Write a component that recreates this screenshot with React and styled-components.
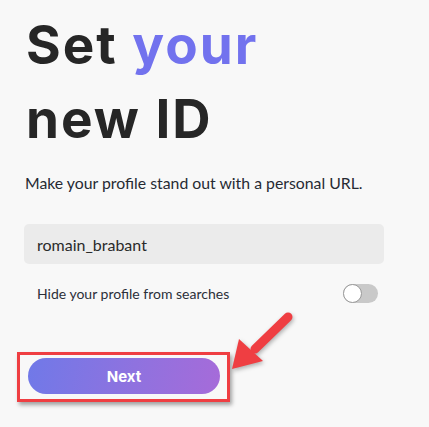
import React from "react";
import styled, { createGlobalStyle } from "styled-components";

const GlobalStyle = createGlobalStyle`
  html, body {
    margin: 0;
    padding: 0;
    background: #f8f8f8;
  }
  body {
    width: 429px;
    height: 427px;
    overflow: hidden;
  }
`;

const Page = styled.main`
  position: relative;
  width: 429px;
  height: 427px;
  padding: 8px 45px 0 24px;
  box-sizing: border-box;
`;

const Title = styled.h1`
  margin: 0 0 0 2px;
  font-family: Inter, "Noto Sans", sans-serif;
  font-weight: 700;
  font-size: 53px;
  line-height: 74px;
  letter-spacing: 2px;
  color: #262626;
`;

const Accent = styled.span`
  color: #7272ee;
`;

const Lead = styled.p`
  margin: 17px 0 0 1px;
  font-family: Lato, sans-serif;
  font-size: 15.8px;
  color: #262a33;
`;

const Field = styled.input`
  display: block;
  width: 360px;
  height: 40px;
  margin-top: 32px;
  padding: 0 13px;
  box-sizing: border-box;
  border: none;
  border-radius: 5px;
  background: #ebebeb;
  font-family: Lato, sans-serif;
  font-size: 16px;
  color: #2a2a2a;
  outline: none;
`;

const OptionRow = styled.label`
  display: flex;
  align-items: center;
  justify-content: space-between;
  margin-top: 20px;
  padding: 0 6px 0 13px;
  width: 360px;
  box-sizing: border-box;
  font-family: Lato, sans-serif;
  font-size: 14px;
  color: #2b2f38;
`;

const Toggle = styled.span`
  position: relative;
  width: 35px;
  height: 19px;
  border-radius: 10px;
  background: #c9c9c9;

  &::after {
    content: "";
    position: absolute;
    left: 0;
    top: 0;
    width: 17px;
    height: 17px;
    border-radius: 50%;
    background: #fff;
    border: 1px solid #9a9a9a;
  }
`;

const Highlight = styled.div`
  display: inline-block;
  margin: 49px 0 0 -7px;
  padding: 3px 7px 5px 8px;
  border: 3px solid #ef3e42;
  box-shadow: 2px 3px 4px rgba(0, 0, 0, 0.35);
`;

const NextButton = styled.button`
  display: block;
  width: 192px;
  height: 36px;
  border: none;
  border-radius: 18px;
  background: linear-gradient(100deg, #7079e8 0%, #8f72df 55%, #a66bd9 100%);
  font-family: Inter, sans-serif;
  font-weight: 700;
  font-size: 15px;
  color: #fff;
  cursor: pointer;
`;

const Arrow = styled.svg`
  position: absolute;
  left: 225px;
  top: 305px;
  overflow: visible;
  filter: drop-shadow(1px 2px 2px rgba(0, 0, 0, 0.3));
`;

export default function App() {
  return (
    <>
      <GlobalStyle />
      <Page>
        <Title>
          Set <Accent>your</Accent>
          <br />
          new ID
        </Title>
        <Lead>Make your profile stand out with a personal URL.</Lead>
        <Field defaultValue="romain_brabant" />
        <OptionRow>
          Hide your profile from searches
          <Toggle />
        </OptionRow>
        <Highlight>
          <NextButton>Next</NextButton>
        </Highlight>
        <Arrow width="70" height="70" viewBox="0 0 70 70">
          <line x1="63" y1="12" x2="30" y2="44" stroke="#ef3e42" strokeWidth="9" strokeLinecap="round" />
          <polygon points="7,64 14,34 38,56" fill="#ef3e42" />
        </Arrow>
      </Page>
    </>
  );
}
